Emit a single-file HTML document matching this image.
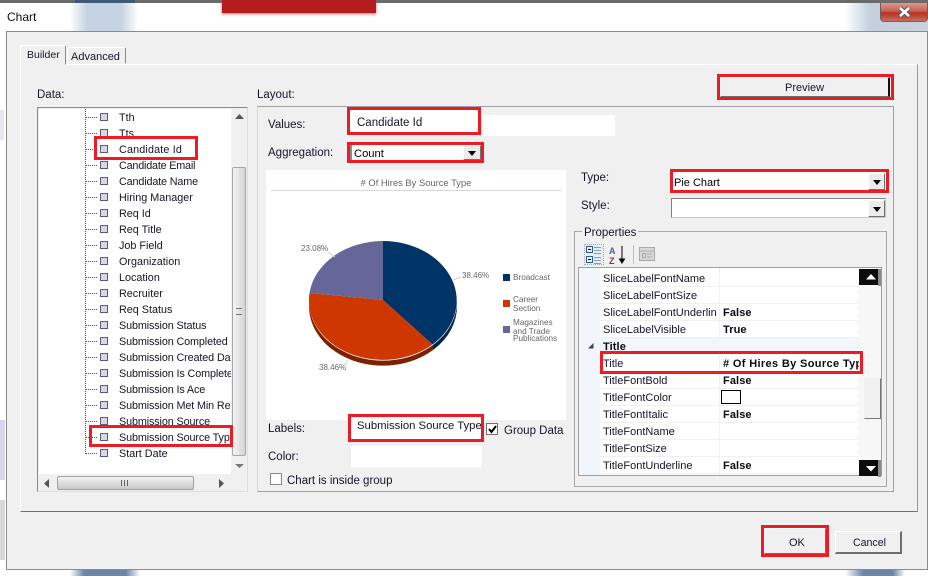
<!DOCTYPE html>
<html><head><meta charset="utf-8"><title>Chart</title>
<style>
html,body{margin:0;padding:0}
#p{position:relative;width:928px;height:576px;overflow:hidden;background:#fff;font-family:"Liberation Sans",sans-serif;font-size:11.5px;color:#14142a}
#p div{position:absolute;box-sizing:border-box}
.t{white-space:nowrap;line-height:16px;height:16px;margin-top:1px}
.red{border:3px solid #ed1c24}
.w{background:#fff}
.btn{background:#f0f0f0;border:1px solid;border-color:#fff #6e6e6e #6e6e6e #fff}
.cb{background:#ececec;border:1px solid;border-color:#fff #707070 #707070 #fff}
.cb:after,.ar:after{content:"";position:absolute;left:50%;top:50%;margin:-2px 0 0 -4px;border:4px solid transparent;border-top:5px solid #000;border-bottom:0}
.i{width:8px;height:8px;background:#d8d8e4;border:1px solid #5a5a7a}
.h{height:1px;border-top:1px dotted #555;width:11px}
.b{font-weight:bold;font-size:11px;letter-spacing:.1px;color:#0a0a14}
.n{font-size:11px}
.rl{height:1px;background:#f0f0f0;left:600px;width:259px}
#tree .t{font-size:10.8px}
#tree .s{letter-spacing:-.12px}
.c{font-size:8.2px;color:#666}
</style></head><body><div id="p">
<!-- background bits -->
<div style="left:0;top:0;width:928px;height:3px;background:#6a6a6a"></div>
<div style="left:75px;top:0;width:60px;height:3px;background:#42587a"></div>
<div style="left:6px;top:3px;width:922px;height:28px;background:#fff"></div>
<div style="left:0;top:3px;width:6px;height:566px;background:#fff"></div>
<div style="left:70px;top:3px;width:68px;height:28px;background:linear-gradient(90deg,#fff,#c6d3e2 25%,#c6d3e2 75%,#fff)"></div>
<div style="left:222px;top:0;width:154px;height:13px;background:#b21d1f;box-shadow:0 1px 3px #c66"></div>
<div style="left:845px;top:3px;width:83px;height:28px;background:linear-gradient(90deg,#fff,#c3d0de 30%,#c8d2dd)"></div>
<div style="left:0;top:110px;width:4px;height:30px;background:#e8e4f2"></div>
<div style="left:0;top:420px;width:5px;height:60px;background:#dcd6ec"></div>
<div style="left:0;top:500px;width:5px;height:60px;background:#d8d8d8"></div>
<div style="left:70px;top:570px;width:70px;height:6px;background:linear-gradient(90deg,#fff,#6d86a8 20%,#6d86a8 80%,#fff)"></div>
<div style="left:845px;top:570px;width:60px;height:6px;background:linear-gradient(90deg,#fff,#6d86a8 30%,#6d86a8 80%,#fff)"></div>
<!-- close -->
<div style="left:880px;top:3px;width:48px;height:19px;background:linear-gradient(#d99a90,#c9604f 45%,#b83020 55%,#c4705f);border:1px solid #7a5a5a;border-top:0;border-radius:0 0 4px 4px"></div>
<svg style="position:absolute;left:897px;top:6px" width="15" height="12"><path d="M3 2 L12 10 M12 2 L3 10" stroke="#555" stroke-width="4.5"/><path d="M3 2 L12 10 M12 2 L3 10" stroke="#fff" stroke-width="2.6"/></svg>
<div class="t" style="left:7px;top:9px;font-size:12px;color:#111;margin-top:0">Chart</div>
<!-- frame -->
<div style="left:6px;top:31px;width:922px;height:539px;background:#f0f0f0;border:1px solid #8c8c8c"></div>
<!-- tab pane -->
<div style="left:20px;top:64px;width:898px;height:448px;border:1px solid;border-color:#fff #9a9a9a #707070 #fff"></div>
<div style="left:20px;top:45px;width:46px;height:20px;background:#f0f0f0;border:1px solid;border-color:#fff #8a8a8a #f0f0f0 #fff;border-radius:2px 2px 0 0"></div>
<div class="t" style="left:27px;top:46px;font-size:10.5px">Builder</div>
<div style="left:67px;top:47px;width:59px;height:17px;background:#f0f0f0;border:1px solid;border-color:#fff #8a8a8a #f0f0f0 #fff;border-radius:2px 2px 0 0"></div>
<div class="t" style="left:71px;top:48px;font-size:11px">Advanced</div>
<div class="t" style="left:37px;top:86px;">Data:</div>
<div class="t" style="left:257px;top:86px;">Layout:</div>
<!-- tree -->
<div style="left:37px;top:107px;width:211px;height:385px;background:#f0f0f0;border:1px solid;border-color:#8a8a8a #ddd #ddd #8a8a8a"></div>
<div id="tree" class="w" style="left:39px;top:109px;width:192px;height:365px;overflow:hidden;border:0">
<div style="left:46px;top:0;height:345px;border-left:1px dotted #555"></div>
<div class="h" style="left:47px;top:8px"></div><div class="i" style="left:61px;top:4px"></div><div class="t" style="left:80px;top:0">Tth</div>
<div class="h" style="left:47px;top:24px"></div><div class="i" style="left:61px;top:20px"></div><div class="t" style="left:80px;top:16px">Tts</div>
<div class="h" style="left:47px;top:40px"></div><div class="i" style="left:61px;top:36px"></div><div class="t" style="left:80px;top:32px;letter-spacing:.15px">Candidate Id</div>
<div class="h" style="left:47px;top:56px"></div><div class="i" style="left:61px;top:52px"></div><div class="t" style="left:80px;top:48px;letter-spacing:-.2px">Candidate Email</div>
<div class="h" style="left:47px;top:72px"></div><div class="i" style="left:61px;top:68px"></div><div class="t" style="left:80px;top:64px;letter-spacing:-.15px">Candidate Name</div>
<div class="h" style="left:47px;top:88px"></div><div class="i" style="left:61px;top:84px"></div><div class="t" style="left:80px;top:80px">Hiring Manager</div>
<div class="h" style="left:47px;top:104px"></div><div class="i" style="left:61px;top:100px"></div><div class="t" style="left:80px;top:96px">Req Id</div>
<div class="h" style="left:47px;top:120px"></div><div class="i" style="left:61px;top:116px"></div><div class="t" style="left:80px;top:112px">Req Title</div>
<div class="h" style="left:47px;top:136px"></div><div class="i" style="left:61px;top:132px"></div><div class="t" style="left:80px;top:128px">Job Field</div>
<div class="h" style="left:47px;top:152px"></div><div class="i" style="left:61px;top:148px"></div><div class="t" style="left:80px;top:144px">Organization</div>
<div class="h" style="left:47px;top:168px"></div><div class="i" style="left:61px;top:164px"></div><div class="t" style="left:80px;top:160px">Location</div>
<div class="h" style="left:47px;top:184px"></div><div class="i" style="left:61px;top:180px"></div><div class="t" style="left:80px;top:176px">Recruiter</div>
<div class="h" style="left:47px;top:200px"></div><div class="i" style="left:61px;top:196px"></div><div class="t" style="left:80px;top:192px">Req Status</div>
<div class="h" style="left:47px;top:216px"></div><div class="i" style="left:61px;top:212px"></div><div class="t s" style="left:80px;top:208px">Submission Status</div>
<div class="h" style="left:47px;top:232px"></div><div class="i" style="left:61px;top:228px"></div><div class="t s" style="left:80px;top:224px">Submission Completed Date</div>
<div class="h" style="left:47px;top:248px"></div><div class="i" style="left:61px;top:244px"></div><div class="t s" style="left:80px;top:240px">Submission Created Date</div>
<div class="h" style="left:47px;top:264px"></div><div class="i" style="left:61px;top:260px"></div><div class="t s" style="left:80px;top:256px">Submission Is Complete</div>
<div class="h" style="left:47px;top:280px"></div><div class="i" style="left:61px;top:276px"></div><div class="t s" style="left:80px;top:272px">Submission Is Ace</div>
<div class="h" style="left:47px;top:296px"></div><div class="i" style="left:61px;top:292px"></div><div class="t s" style="left:80px;top:288px">Submission Met Min Req</div>
<div class="h" style="left:47px;top:312px"></div><div class="i" style="left:61px;top:308px"></div><div class="t s" style="left:80px;top:304px">Submission Source</div>
<div class="h" style="left:47px;top:328px"></div><div class="i" style="left:61px;top:324px"></div><div class="t s" style="left:80px;top:320px">Submission Source Type</div>
<div class="h" style="left:47px;top:344px"></div><div class="i" style="left:61px;top:340px"></div><div class="t" style="left:80px;top:336px">Start Date</div>
</div>
<!-- tree scrollbars -->
<div style="left:232px;top:167px;width:14px;height:289px;background:linear-gradient(90deg,#f4f4f4,#d4d4d4);border:1px solid #a8a8a8;border-radius:2px"></div>
<div style="left:236px;top:308px;width:6px;height:7px;border-top:1px solid #777;border-bottom:1px solid #777"></div>
<svg style="position:absolute;left:234px;top:114px" width="11" height="6"><path d="M1 5 L5.5 0 L10 5Z" fill="#555"/></svg>
<svg style="position:absolute;left:234px;top:463px" width="11" height="6"><path d="M1 1 L5.5 5 L10 1Z" fill="#777"/></svg>
<div style="left:57px;top:476px;width:137px;height:14px;background:linear-gradient(#f2f2f2,#c8c8c8);border:1px solid #a0a0a0;border-radius:2px"></div>
<div style="left:121px;top:480px;width:8px;height:6px;background:repeating-linear-gradient(90deg,#666 0 1px,transparent 1px 3px)"></div>
<svg style="position:absolute;left:44px;top:479px" width="6" height="9"><path d="M5 0 L0 4.5 L5 9Z" fill="#555"/></svg>
<svg style="position:absolute;left:219px;top:479px" width="6" height="9"><path d="M0 0 L5 4.5 L0 9Z" fill="#555"/></svg>
<!-- Layout panel -->
<div style="left:257px;top:106px;width:637px;height:386px;border:1px solid;border-color:#a0a0a0 #a0a0a0 #a0a0a0 #d8d8d8"></div>
<!-- Preview -->
<div class="btn" style="left:720px;top:77px;width:170px;height:20px;border-right:2px solid #111"></div>
<div class="t" style="left:785px;top:79px;font-size:11px">Preview</div>
<div class="red" style="left:717px;top:74px;width:177px;height:26px;background:transparent"></div>
<!-- Values -->
<div class="t" style="left:268px;top:116px;">Values:</div>
<div class="w" style="left:483px;top:115px;width:132px;height:21px"></div>
<div class="w red" style="left:347px;top:107px;width:134px;height:28px"></div>
<div class="t" style="left:357px;top:114px;">Candidate Id</div>
<!-- Aggregation -->
<div class="t" style="left:268px;top:144px;">Aggregation:</div>
<div class="w red" style="left:347px;top:142px;width:137px;height:21px"></div>
<div style="left:350px;top:145px;width:2px;height:15px;background:#888"></div>
<div class="cb" style="left:463px;top:145px;width:18px;height:15px"></div>
<div class="t" style="left:354px;top:145px;color:#000;font-size:11.2px">Count</div>
<!-- Chart -->
<div class="w" style="left:266px;top:170px;width:300px;height:250px"></div>
<div class="t" style="left:266px;top:174px;width:300px;text-align:center;font-size:9.4px;color:#666">&#35; Of Hires By Source Type</div>
<div style="left:271px;top:190px;width:291px;height:1px;background:#d8d8e6"></div>
<svg style="position:absolute;left:0;top:0" width="928" height="576">
<path d="M457 300 A74 59.5 0 0 1 433 345 L433 350 A74 59.5 0 0 0 457 305Z" fill="#012347"/>
<path d="M433 345 A74 59.5 0 0 1 309 300 L309 305 A74 59.5 0 0 0 433 350Z" fill="#7d2000"/>
<path d="M383 300 L383 241 A74 59.5 0 0 1 432.5 344.5Z" fill="#003366"/>
<path d="M383 300 L432.5 344.5 A74 59.5 0 0 1 309.5 293Z" fill="#cf3700"/>
<path d="M383 300 L309.5 293 A74 59.5 0 0 1 383 241Z" fill="#666699"/>
<path d="M453 280 L461 277 M328 252 L335 257 M348 360 L345 365" stroke="#d0d0dc" fill="none"/>
<rect x="503" y="274" width="7" height="7" fill="#003366"/>
<rect x="503" y="300" width="7" height="7" fill="#cf3700"/>
<rect x="503" y="326" width="7" height="7" fill="#666699"/>
</svg>
<div class="t c" style="left:462px;top:267px;font-size:8px">38.46%</div>
<div class="t c" style="left:301px;top:240px;font-size:8px">23.08%</div>
<div class="t c" style="left:319px;top:359px;font-size:8px">38.46%</div>
<div class="t c" style="left:513px;top:269px">Broadcast</div>
<div class="t c" style="left:513px;top:291px">Career</div>
<div class="t c" style="left:513px;top:300px">Section</div>
<div class="t c" style="left:513px;top:314px">Magazines</div>
<div class="t c" style="left:513px;top:323px">and Trade</div>
<div class="t c" style="left:513px;top:330px">Publications</div>
<!-- Labels -->
<div class="t" style="left:268px;top:420px;">Labels:</div>
<div class="w red" style="left:348px;top:414px;width:136px;height:28px"></div>
<div class="t" style="left:357px;top:417px;font-size:11.3px">Submission Source Type</div>
<div class="w" style="left:486px;top:423px;width:12px;height:12px;border:1px solid #707070"></div>
<svg style="position:absolute;left:487px;top:424px" width="11" height="11"><path d="M2 5 L4.5 8 L9 2" stroke="#000" stroke-width="2" fill="none"/></svg>
<div class="t" style="left:504px;top:422px;">Group Data</div>
<div class="t" style="left:268px;top:448px;">Color:</div>
<div class="w" style="left:351px;top:446px;width:131px;height:21px"></div>
<div class="w" style="left:270px;top:473px;width:12px;height:12px;border:1px solid #8a8a8a"></div>
<div class="t" style="left:287px;top:472px;">Chart is inside group</div>
<!-- Type -->
<div class="t" style="left:581px;top:169px;">Type:</div>
<div class="w red" style="left:670px;top:169px;width:219px;height:24px"></div>
<div class="cb" style="left:868px;top:173px;width:17px;height:17px"></div>
<div class="t" style="left:674px;top:174px;color:#000;font-size:11px">Pie Chart</div>
<div class="t" style="left:581px;top:197px;">Style:</div>
<div class="w" style="left:671px;top:198px;width:215px;height:20px;border:1px solid;border-color:#808080 #c8c8c8 #c8c8c8 #808080"></div>
<div class="cb" style="left:868px;top:200px;width:17px;height:17px"></div>
<!-- Properties -->
<div style="left:574px;top:231px;width:313px;height:256px;border:1px solid #a8a8a8"></div>
<div class="t" style="left:582px;top:224px;padding:0 2px;background:#f0f0f0;">Properties</div>
<div style="left:584px;top:244px;width:20px;height:21px;background:#e6eef6;border:1px dotted #aaa"></div>
<svg style="position:absolute;left:585px;top:245px" width="75" height="21">
<rect x="1.500" y="1.500" width="6" height="6" fill="#e8f0fa" stroke="#2f5a9a"/><path d="M3 4.500H6" stroke="#000"/>
<rect x="1.500" y="11.500" width="6" height="6" fill="#e8f0fa" stroke="#2f5a9a"/><path d="M3 14.500H6" stroke="#000"/>
<path d="M9 2.500H16M9 5.500H16M9 8.500H16M9 12.500H16M9 15.500H16M9 18.500H16" stroke="#8a9ab0"/>
<text x="24" y="9" font-family="Liberation Sans,sans-serif" font-size="9" font-weight="bold" fill="#3a5fb0">A</text>
<text x="24" y="19" font-family="Liberation Sans,sans-serif" font-size="9" font-weight="bold" fill="#a03040">Z</text>
<path d="M37 1V17M34.500 14L37 18L39.500 14Z" stroke="#000" fill="#000"/>
<path d="M48.500 0V19" stroke="#c0c0c0"/>
<rect x="54.500" y="2.500" width="15" height="13" fill="#d8d8d8" stroke="#a8a8a8"/>
<path d="M54 6H70" stroke="#b0b0b0"/><rect x="57.500" y="8.500" width="3" height="4" fill="none" stroke="#aaa"/><path d="M62 9H67M62 12H67" stroke="#aaa"/>
</svg>
<div style="left:578px;top:267px;width:304px;height:209px;background:#fff;border:1px solid;border-color:#a0a0a0 #a0a0a0 #a0a0a0 #a0a0a0"></div>
<div style="left:579px;top:268px;width:21px;height:207px;background:#f1f6fd"></div>
<div style="left:600px;top:337px;width:259px;height:17px;background:#f1f6fd"></div>
<div style="left:719px;top:268px;width:1px;height:69px;background:#f0f0f0"></div>
<div style="left:719px;top:354px;width:1px;height:121px;background:#f0f0f0"></div>
<div class="rl" style="top:286px"></div><div class="rl" style="top:303px"></div><div class="rl" style="top:320px"></div><div class="rl" style="top:337px"></div><div class="rl" style="top:388px"></div><div class="rl" style="top:405px"></div><div class="rl" style="top:422px"></div><div class="rl" style="top:439px"></div><div class="rl" style="top:456px"></div><div class="rl" style="top:473px"></div>
<div class="t n" style="left:603px;top:270px">SliceLabelFontName</div>
<div class="t n" style="left:603px;top:287px">SliceLabelFontSize</div>
<div style="left:603px;top:304px;width:114px;height:18px;overflow:hidden"><div class="t n" style="left:0;top:0">SliceLabelFontUnderline</div></div>
<div class="t b" style="left:723px;top:304px">False</div>
<div class="t n" style="left:603px;top:321px">SliceLabelVisible</div>
<div class="t b" style="left:723px;top:321px">True</div>
<svg style="position:absolute;left:587px;top:342px" width="8" height="8"><path d="M6.500 1V6.500H1Z" fill="#444"/></svg>
<div class="t b" style="left:603px;top:338px">Title</div>
<div class="t n" style="left:603px;top:355px">Title</div>
<div style="left:723px;top:355px;width:137px;height:18px;overflow:hidden"><div class="t b" style="left:0;top:0;letter-spacing:.35px">&#35; Of Hires By Source Type</div></div>
<div class="t n" style="left:603px;top:372px">TitleFontBold</div><div class="t b" style="left:723px;top:372px">False</div>
<div class="t n" style="left:603px;top:389px">TitleFontColor</div>
<div class="w" style="left:721px;top:390px;width:20px;height:14px;border:1px solid #000"></div>
<div class="t n" style="left:603px;top:406px">TitleFontItalic</div><div class="t b" style="left:723px;top:406px">False</div>
<div class="t n" style="left:603px;top:423px">TitleFontName</div>
<div class="t n" style="left:603px;top:440px">TitleFontSize</div>
<div class="t n" style="left:603px;top:457px">TitleFontUnderline</div><div class="t b" style="left:723px;top:457px">False</div>
<!-- grid scrollbar -->
<div style="left:859px;top:268px;width:22px;height:207px;background:repeating-conic-gradient(#f0f0f0 0 25%,#fff 0 50%) 0 0/2px 2px"></div>
<div style="left:859px;top:269px;width:20px;height:16px;background:#0c0c0c"></div>
<div style="left:878px;top:269px;width:3px;height:17px;background:#888"></div>
<svg style="position:absolute;left:866px;top:274px" width="10" height="6"><path d="M0 5.500L5 0L10 5.500Z" fill="#fff"/></svg>
<div style="left:864px;top:378px;width:17px;height:41px;background:#f0f0f0;border:1px solid;border-color:#f0f0f0 #777 #777 #f0f0f0"></div>
<div style="left:859px;top:460px;width:20px;height:16px;background:#0c0c0c"></div>
<div style="left:878px;top:460px;width:3px;height:17px;background:#888"></div>
<svg style="position:absolute;left:866px;top:466px" width="10" height="6"><path d="M0 0L5 5.500L10 0Z" fill="#fff"/></svg>
<div class="red" style="left:600px;top:351px;width:263px;height:23px;background:transparent"></div>
<!-- bottom -->
<div class="btn" style="left:764px;top:528px;width:62px;height:26px"></div>
<div class="t" style="left:789px;top:534px;font-size:11px">OK</div>
<div class="red" style="left:761px;top:525px;width:68px;height:32px;background:transparent"></div>
<div class="btn" style="left:835px;top:531px;width:67px;height:23px;border-bottom:2px solid #6e6e6e;border-right:2px solid #6e6e6e"></div>
<div class="t" style="left:853px;top:534px;font-size:10.6px">Cancel</div>
<!-- tree red boxes -->
<div class="red" style="left:94px;top:136px;width:104px;height:24px;background:transparent"></div>
<div class="red" style="left:89px;top:425px;width:144px;height:22px;background:transparent"></div>
</div></body></html>
